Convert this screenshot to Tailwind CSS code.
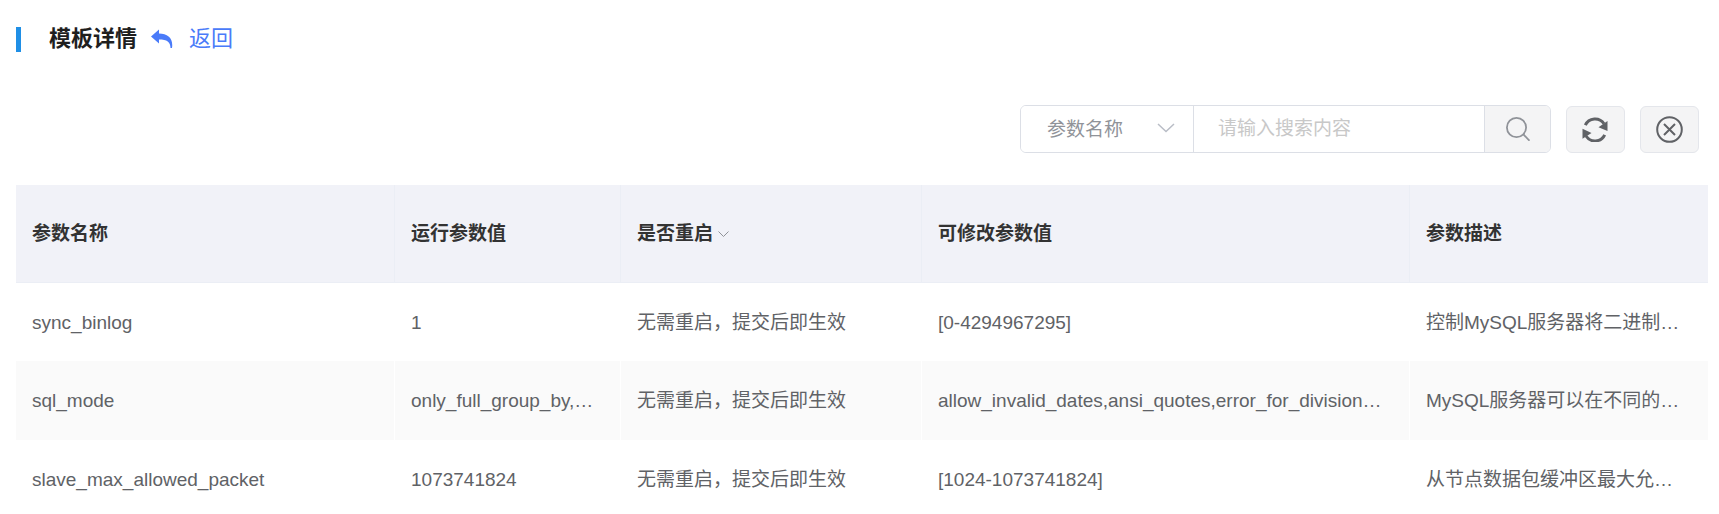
<!DOCTYPE html>
<html lang="zh-CN">
<head>
    <meta charset="UTF-8">
    <meta name="viewport" content="width=device-width, initial-scale=1.0">
    <title>模板详情</title>
    <script src="https://cdn.jsdelivr.net/npm/@tailwindcss/browser@4"></script>
</head>
<body class="h-screen overflow-hidden bg-white pl-4 pr-[11px] pt-[21px] font-['Liberation_Sans','Noto_Sans_CJK_SC',sans-serif] text-[19px] text-[#606266]">

    <header class="flex h-9 items-center">
        <span class="h-[25px] w-[5px] bg-[#1f8fe6]"></span>
        <h1 class="ml-7 text-[22px] leading-9 font-bold text-[#1f1f1f]">模板详情</h1>
        <a href="#" class="ml-[14px] flex items-center gap-4 text-[22px] leading-9 text-[#4a7bf9]">
            <svg class="h-5 w-[22px]" viewBox="0 0 22 20" fill="currentColor" aria-hidden="true">
                <path d="M0 7.500 8 .5v4C17 4.500 22.500 9.500 21 19h-1.500C19.500 13 16 10.500 8 10.500v4z"/>
            </svg>
            返回
        </a>
    </header>

    <!-- toolbar -->
    <form class="mt-12 mr-[9px] flex items-end justify-end gap-[15px]">
        <div class="flex h-12 w-[531px] overflow-hidden rounded-md border border-[#dcdfe6]">
            <div class="relative w-[173px] border-r border-[#dcdfe6]">
                <select aria-label="搜索字段" class="h-full w-full appearance-none bg-white pt-[2px] pl-[26px] text-[#909399] outline-none">
                    <option>参数名称</option>
                </select>
                <svg class="pointer-events-none absolute top-[17px] right-[18px] h-[10px] w-[18px]" viewBox="0 0 18 10" fill="none" stroke="#b9bdc6" stroke-width="1.500" aria-hidden="true">
                    <path d="M1 1l8 7.500L17 1"/>
                </svg>
            </div>
            <input type="text" aria-label="搜索内容" placeholder="请输入搜索内容" class="min-w-0 flex-1 px-6 outline-none placeholder:text-[#c8c8c8]">
            <button type="button" aria-label="搜索" class="flex w-[66px] items-center justify-center border-l border-[#dcdfe6] bg-[#f4f4f5]">
                <svg class="h-6 w-6" viewBox="0 0 24 24" fill="none" stroke="#909399" stroke-width="1.800" aria-hidden="true">
                    <circle cx="10.500" cy="10.500" r="9.600"/>
                    <path d="M17.200 17.200l6.300 6.500"/>
                </svg>
            </button>
        </div>
        <button type="button" aria-label="刷新" class="flex h-[47px] w-[59px] items-center justify-center rounded-md border border-[#e4e6eb] bg-[#f4f4f5]">
            <svg class="h-[25px] w-[27px]" viewBox="0 0 27 25" aria-hidden="true">
                <g fill="none" stroke="#606266" stroke-width="3">
                    <path d="M3.300 8.200A10.700 10.700 0 0 1 22 6.800"/>
                    <path d="M22.700 17.800A10.700 10.700 0 0 1 4 19"/>
                </g>
                <path d="M25.500 4v10L16.500 10.300zM.5 21.800V11.800L9.500 16z" fill="#606266"/>
            </svg>
        </button>
        <button type="button" aria-label="清除" class="flex h-[47px] w-[59px] items-center justify-center rounded-md border border-[#e4e6eb] bg-[#f4f4f5]">
            <svg class="h-[27px] w-[27px]" viewBox="0 0 27 27" fill="none" stroke="#606266" stroke-width="2" aria-hidden="true">
                <circle cx="13.500" cy="13.500" r="12.300"/>
                <path d="M8 8l11 11M19 8L8 19"/>
            </svg>
        </button>
    </form>

    <table class="mt-8 w-full table-fixed border-separate border-spacing-0 text-left">
        <colgroup>
            <col class="w-[379px]">
            <col class="w-[226px]">
            <col class="w-[301px]">
            <col class="w-[488px]">
            <col class="w-[298px]">
        </colgroup>
        <thead class="bg-[#f1f2f8] text-[#333333]">
            <tr class="h-[98px]">
                <th class="border-r border-b border-r-[#ebeef5] border-b-[#ebeef5] px-4 pt-[2px]">参数名称</th>
                <th class="border-r border-b border-r-[#ebeef5] border-b-[#ebeef5] px-4 pt-[2px]">运行参数值</th>
                <th class="border-r border-b border-r-[#ebeef5] border-b-[#ebeef5] px-4 pt-[2px]">
                    <button type="button" class="flex items-center gap-[5px] font-bold">
                        是否重启
                        <svg class="h-[7px] w-[11px]" viewBox="0 0 11 7" fill="none" stroke="#909399" aria-hidden="true">
                            <path d="M.5.5l5 5 5-5"/>
                        </svg>
                    </button>
                </th>
                <th class="border-r border-b border-r-[#ebeef5] border-b-[#ebeef5] px-4 pt-[2px]">可修改参数值</th>
                <th class="border-b border-[#ebeef5] px-4 pt-[2px]">参数描述</th>
            </tr>
        </thead>
        <tbody class="whitespace-nowrap">
            <tr class="h-[78px]">
                <td class="border-r border-white px-4 pt-[2px]">sync_binlog</td>
                <td class="border-r border-white px-4 pt-[2px]">1</td>
                <td class="border-r border-white px-4 pt-[2px]">无需重启，提交后即生效</td>
                <td class="border-r border-white px-4 pt-[2px]">[0-4294967295]</td>
                <td class="px-4 pt-[2px]">控制MySQL服务器将二进制…</td>
            </tr>
            <tr class="h-[79px] bg-[#fafafa]">
                <td class="border-r border-white px-4 pt-[2px]">sql_mode</td>
                <td class="border-r border-white px-4 pt-[2px]">only_full_group_by,…</td>
                <td class="border-r border-white px-4 pt-[2px]">无需重启，提交后即生效</td>
                <td class="border-r border-white px-4 pt-[2px]">allow_invalid_dates,ansi_quotes,error_for_division…</td>
                <td class="px-4 pt-[2px]">MySQL服务器可以在不同的…</td>
            </tr>
            <tr class="h-[78px]">
                <td class="border-r border-white px-4 pt-[2px]">slave_max_allowed_packet</td>
                <td class="border-r border-white px-4 pt-[2px]">1073741824</td>
                <td class="border-r border-white px-4 pt-[2px]">无需重启，提交后即生效</td>
                <td class="border-r border-white px-4 pt-[2px]">[1024-1073741824]</td>
                <td class="px-4 pt-[2px]">从节点数据包缓冲区最大允…</td>
            </tr>
        </tbody>
    </table>

</body>
</html>
